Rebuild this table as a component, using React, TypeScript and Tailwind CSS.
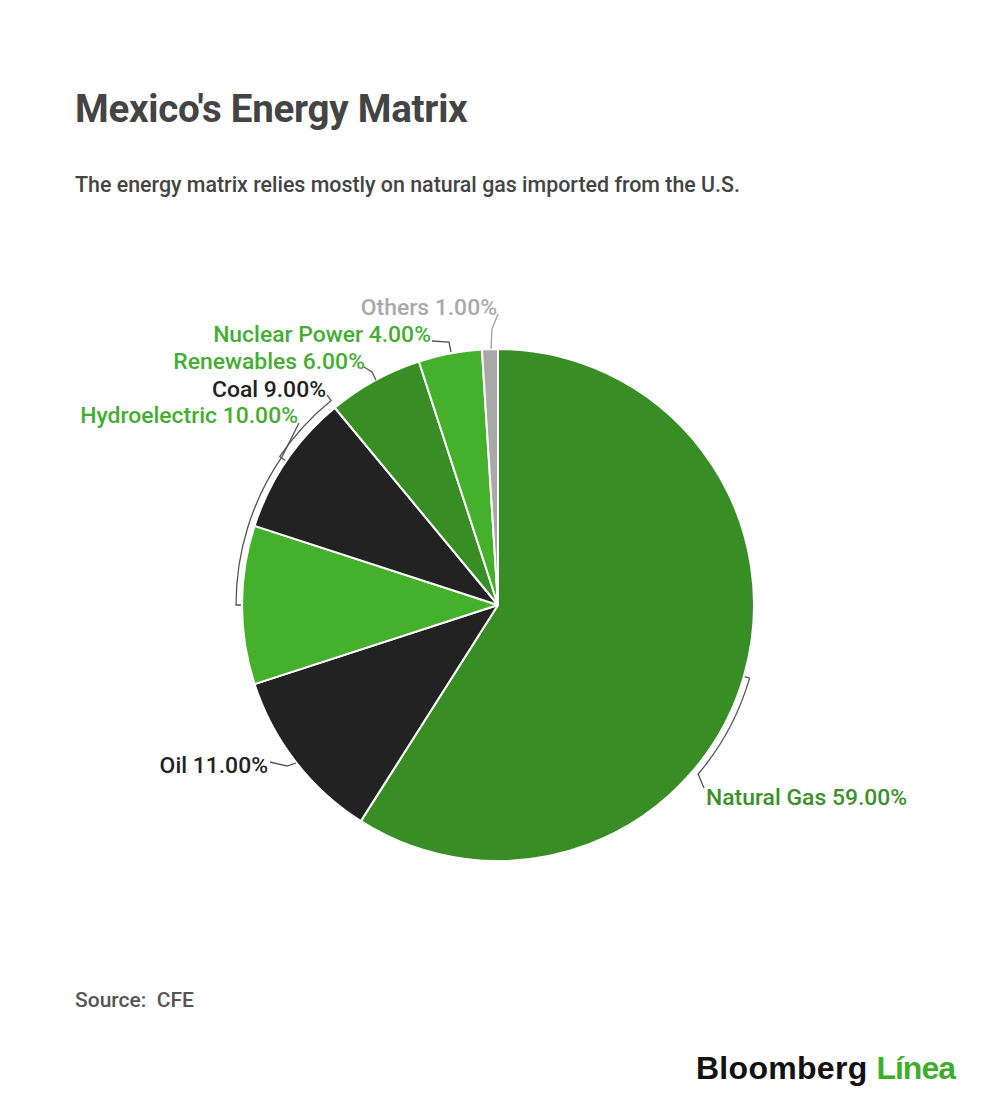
import React from "react";

const CX = 498;
const CY = 606;
const R = 256;

function pt(deg: number, r: number) {
  const a = (deg * Math.PI) / 180;
  return [CX + r * Math.sin(a), CY - r * Math.cos(a)];
}

const slices = [
  { v: 59, c: "#388e24" },
  { v: 11, c: "#222222" },
  { v: 10, c: "#44b02b" },
  { v: 9, c: "#222222" },
  { v: 6, c: "#388e24" },
  { v: 4, c: "#44b02b" },
  { v: 1, c: "#a8a8a8" },
];

function slicePath(a0: number, a1: number) {
  const [x0, y0] = pt(a0, R);
  const [x1, y1] = pt(a1, R);
  const large = a1 - a0 > 180 ? 1 : 0;
  return `M ${CX} ${CY} L ${x0} ${y0} A ${R} ${R} 0 ${large} 1 ${x1} ${y1} Z`;
}

function arcLeader(start: number[], a0: number, a1: number, r: number) {
  const [ax, ay] = pt(a0, r);
  const [bx, by] = pt(a1, r);
  const [tx, ty] = pt(a1, R + 1);
  const sweep = a1 > a0 ? 1 : 0;
  return `M ${start[0]} ${start[1]} L ${ax} ${ay} A ${r} ${r} 0 0 ${sweep} ${bx} ${by} L ${tx} ${ty}`;
}

export default function App() {
  let acc = 0;
  const paths = slices.map((s) => {
    const a0 = acc * 3.6;
    acc += s.v;
    const a1 = acc * 3.6;
    return { d: slicePath(a0, a1), c: s.c };
  });

  const [ngx, ngy] = pt(106.2, R + 1);
  const [ng1x, ng1y] = pt(106.2, 262);
  const [ng2x, ng2y] = pt(130.2, 262);
  const ngLeader = `M ${ngx} ${ngy} L ${ng1x} ${ng1y} A 262 262 0 0 1 ${ng2x} ${ng2y} L 704 789`;
  const coalLeader = arcLeader([327, 396], 320.8, 304.2, 264);
  const [h0x, h0y] = pt(304.5, 262);
  const [h1x, h1y] = pt(270, 262);
  const [h2x, h2y] = pt(270, R + 1);
  const hydroLeader = `M 299 424 L ${h0x} ${h0y} A 262 262 0 0 0 ${h1x} ${h1y} L ${h2x} ${h2y}`;

  const labelStyle = { fontFamily: "Roboto, 'Liberation Sans', sans-serif", fontSize: 22.9, fontWeight: 500 };

  return (
    <div className="w-[1000px] h-[1111px] bg-white flex flex-col" style={{ fontFamily: "Roboto, 'Liberation Sans', sans-serif" }}>
      <div className="pl-[75px] pt-[86px]">
        <h1 className="text-[38.5px] leading-[46px] font-bold text-[#444444] tracking-[-0.25px]">Mexico's Energy Matrix</h1>
        <p className="mt-[40px] text-[21.4px] leading-[26px] font-medium text-[#444444]">
          The energy matrix relies mostly on natural gas imported from the U.S.
        </p>
      </div>
      <svg className="mt-[81px] block" width={1000} height={600} viewBox="0 280 1000 600">
        {paths.map((p, i) => (
          <path key={i} d={p.d} fill={p.c} stroke="#ffffff" strokeWidth={2} strokeLinejoin="round" />
        ))}
        <g fill="none" stroke="#555555" strokeWidth={1.3}>
          <path d={ngLeader} />
          <path d="M 270 763 L 287 767 L 296 764" />
          <path d={hydroLeader} />
          <path d={coalLeader} />
          <path d="M 364 368 L 372 373 L 376 381" />
          <path d="M 432 342 L 449 343 L 451 353" />
          <path d="M 498 315 L 492 330 L 491 350" stroke="#a0a0a0" />
        </g>
        <g style={labelStyle}>
          <text x={497} y={316} textAnchor="end" fill="#a9a9a9">Others 1.00%</text>
          <text x={431} y={343} textAnchor="end" fill="#45ad32">Nuclear Power 4.00%</text>
          <text x={365} y={370} textAnchor="end" fill="#45ad32">Renewables 6.00%</text>
          <text x={326} y={398} textAnchor="end" fill="#222222">Coal 9.00%</text>
          <text x={298} y={424} textAnchor="end" fill="#45ad32">Hydroelectric 10.00%</text>
          <text x={268} y={774} textAnchor="end" fill="#222222">Oil 11.00%</text>
          <text x={706} y={806} textAnchor="start" fill="#3d8f2b">Natural Gas 59.00%</text>
        </g>
      </svg>
      <div className="pl-[75px] mt-[109px] text-[21px] leading-[24px] font-medium text-[#555555]">Source:&nbsp; CFE</div>
      <div className="flex justify-end pr-[45px] mt-[38px]">
        <div
          className="text-[32px] leading-[36px] font-bold"
          style={{ fontFamily: "'Liberation Sans', Arial, sans-serif" }}
        >
          <span className="text-[#111111] tracking-[0.3px]">Bloomberg</span>{" "}
          <span className="text-[#3fae2a] tracking-[-1px]">Línea</span>
        </div>
      </div>
    </div>
  );
}
